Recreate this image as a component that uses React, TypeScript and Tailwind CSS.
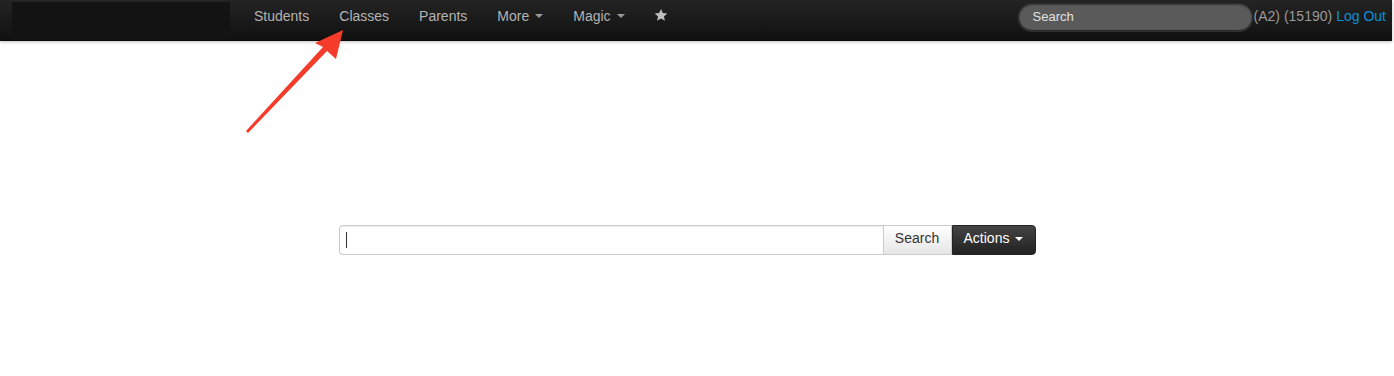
import React from "react";

function Caret({ color = "#999" }: { color?: string }) {
  return (
    <span
      className="inline-block ml-[6px] align-middle"
      style={{ width: 0, height: 0, borderLeft: "4px solid transparent", borderRight: "4px solid transparent", borderTop: `4px solid ${color}` }}
    />
  );
}

export default function App() {
  return (
    <div className="relative w-[1394px] h-[376px] bg-white overflow-hidden" style={{ fontFamily: '"Liberation Sans", Arial, sans-serif' }}>
      <div className="h-[41px] w-[1392px] flex items-center bg-gradient-to-b from-[#242424] to-[#111] border-b border-[#0a0a0a] shadow-[0_1px_3px_rgba(0,0,0,0.25)]">
        <div className="ml-[12px] w-[218px] h-[36px] bg-[#131313]" />
        <nav className="flex items-start text-[14px] leading-[20px] text-[#b3b3b3] h-full pt-[6px]">
          <span className="ml-[24px]">Students</span>
          <span className="ml-[30px]">Classes</span>
          <span className="ml-[30px]">Parents</span>
          <span className="ml-[30px] flex items-center">More<Caret /></span>
          <span className="ml-[30px] flex items-center">Magic<Caret /></span>
          <span className="ml-[29px] flex items-center h-[20px]">
            <svg width="14" height="14" viewBox="0 0 24 24" className="mb-[2px]">
              <path fill="#bdbdbd" d="M12 1.5l3.2 7.1 7.6.7-5.8 5.1 1.8 7.6L12 18l-6.8 4 1.8-7.6-5.8-5.1 7.6-.7z" />
            </svg>
          </span>
        </nav>
        <div className="ml-auto flex items-center mr-[6px] text-[14px]">
          <div className="w-[235px] h-[28px] mt-[-7px] rounded-full bg-[#5a5a5a] border border-[#2a2a2a] shadow-[inset_0_1px_2px_rgba(0,0,0,0.4),0_1px_0_rgba(255,255,255,0.12)] flex items-center pl-[14px] text-[13px] text-[#e0e0e0]">
            Search
          </div>
          <span className="ml-[1px] text-[#999] mt-[-8px]">(A2) (15190)</span>
          <span className="ml-[4px] text-[#0a8fd6] mt-[-8px]">Log Out</span>
        </div>
      </div>

      <div className="flex justify-center mt-[184px]">
        <div className="flex h-[30px] ml-[-20px]">
          <div className="w-[544px] h-full border border-[#ccc] border-r-0 rounded-l-[4px] shadow-[inset_0_1px_1px_rgba(0,0,0,0.075)] flex items-center pl-[6px]">
            <div className="w-px h-[16px] bg-[#333]" />
          </div>
          <div className="w-[69px] h-full border border-[#ccc] bg-gradient-to-b from-white to-[#e6e6e6] flex items-center justify-center pb-[3px] text-[14px] text-[#333]">
            Search
          </div>
          <div className="w-[84px] h-full rounded-r-[4px] bg-gradient-to-b from-[#444] to-[#222] border border-[#222] flex items-center justify-center pb-[3px] text-[14px] text-white">
            Actions<Caret color="#fff" />
          </div>
        </div>
      </div>

      <svg className="absolute left-0 top-0 pointer-events-none" width="1394" height="376">
        <polygon fill="#f53b2a" points="343,30 336,59 327,51 248,133 246,131 323,47 315,43" />
      </svg>
    </div>
  );
}
